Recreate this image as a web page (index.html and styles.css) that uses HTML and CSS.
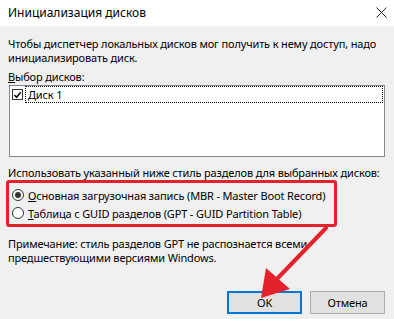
FILE: index.html
```html
<!DOCTYPE html>
<html lang="ru">
<head>
    <meta charset="UTF-8">
    <title>Инициализация дисков</title>
    <link rel="stylesheet" href="styles.css">
</head>
<body>
    <div class="dialog">
        <div class="titlebar">
            <span class="title">Инициализация дисков</span>
            <svg class="close" width="11" height="11" viewBox="0 0 11 11">
                <path d="M0.5 0.5 L10.5 10.5 M10.5 0.5 L0.5 10.5" stroke="#222" stroke-width="1" fill="none"/>
            </svg>
        </div>

        <div class="content">
            <p class="intro">Чтобы диспетчер локальных дисков мог получить к нему доступ, надо<br>инициализировать диск.</p>

            <p class="label"><u>В</u>ыбор дисков:</p>
            <div class="listbox">
                <div class="list-item">
                    <span class="checkbox">
                        <svg width="10" height="10" viewBox="0 0 10 10">
                            <path d="M1.5 5 L4 7.5 L8.5 2" stroke="#111" stroke-width="1.8" fill="none"/>
                        </svg>
                    </span>
                    <span class="item-text">Диск 1</span>
                </div>
            </div>

            <p class="label style-label">Использовать указанный ниже стиль разделов для выбранных дисков:</p>
            <div class="highlight">
                <div class="radio-row">
                    <span class="radio checked"></span>
                    <span><u>О</u>сновная загрузочная запись (MBR - Master Boot Record)</span>
                </div>
                <div class="radio-row">
                    <span class="radio"></span>
                    <span><u>Т</u>аблица с GUID разделов (GPT - GUID Partition Table)</span>
                </div>
            </div>

            <p class="note">Примечание: стиль разделов GPT не распознается всеми<br>предшествующими версиями Windows.</p>

            <div class="buttons">
                <button class="btn btn-default">OK</button>
                <button class="btn">Отмена</button>
            </div>
        </div>

        <!-- red pointer drawn over the dialog -->
        <svg class="arrow" width="394" height="319" viewBox="0 0 394 319">
            <line x1="326" y1="228" x2="274" y2="282" stroke="#e3222b" stroke-width="4" stroke-linecap="round"/>
            <polygon points="261,298 266,268 290,289" fill="#e3222b"/>
        </svg>
    </div>
</body>
</html>
```

FILE: styles.css
```css
:root {
    --panel: #f0f0f0;
    --text: #000;
    --red: #e3222b;
    --accent: #0078d7;
}

* {
    box-sizing: border-box;
    margin: 0;
    padding: 0;
}

body {
    width: 394px;
    height: 319px;
    overflow: hidden;
    font-family: "Noto Sans", "Liberation Sans", sans-serif;
    font-size: 11px;
    letter-spacing: -0.15px;
    color: var(--text);
    background-color: var(--panel);
}

.dialog {
    position: relative;
    width: 394px;
    height: 319px;
}

.titlebar {
    height: 26px;
    background-color: #fff;
    display: flex;
    align-items: center;
    justify-content: space-between;
    padding: 0 7px 2px 8px;
}

.title {
    font-size: 12px;
    letter-spacing: 0;
}

.content {
    padding: 11px 9px 0 8px;
}

.intro,
.note,
.label {
    line-height: 14px;
    white-space: nowrap;
}

.label {
    margin-top: 5px;
}

.listbox {
    margin: 1px 0 0 1px;
    height: 72px;
    background-color: #fff;
    border: 1px solid #828790;
    padding: 0 1px 0 2px;
}

.list-item {
    display: flex;
    align-items: center;
    gap: 2px;
    height: 17px;
}

.checkbox {
    width: 11px;
    height: 11px;
    border: 1px solid #333;
    background-color: #fff;
    display: flex;
    align-items: center;
    justify-content: center;
    flex-shrink: 0;
}

.item-text {
    flex: 1;
    height: 17px;
    line-height: 15px;
    border: 1px dotted #000;
    padding-left: 2px;
}

.style-label {
    margin-top: 9px;
}

.highlight {
    margin: 0 48px 0 -2px;
    border: 3px solid var(--red);
    border-radius: 3px;
    padding: 3px 0 2px 3px;
}

.radio-row {
    display: flex;
    align-items: center;
    gap: 4px;
    height: 18px;
    white-space: nowrap;
}

.radio {
    width: 12px;
    height: 12px;
    border: 1px solid #333;
    border-radius: 50%;
    background-color: #fff;
    display: flex;
    align-items: center;
    justify-content: center;
    flex-shrink: 0;
}

.radio.checked::after {
    content: "";
    width: 6px;
    height: 6px;
    border-radius: 50%;
    background-color: #333;
}

.note {
    margin-top: 10px;
}

.buttons {
    display: flex;
    justify-content: flex-end;
    gap: 8px;
    margin-top: 26px;
}

.btn {
    width: 75px;
    height: 23px;
    font-family: inherit;
    font-size: 11px;
    letter-spacing: -0.15px;
    color: var(--text);
    background-color: #e1e1e1;
    border: 1px solid #adadad;
}

.btn-default {
    border: 2px solid var(--accent);
}

.arrow {
    position: absolute;
    left: 0;
    top: 0;
    pointer-events: none;
}
```
